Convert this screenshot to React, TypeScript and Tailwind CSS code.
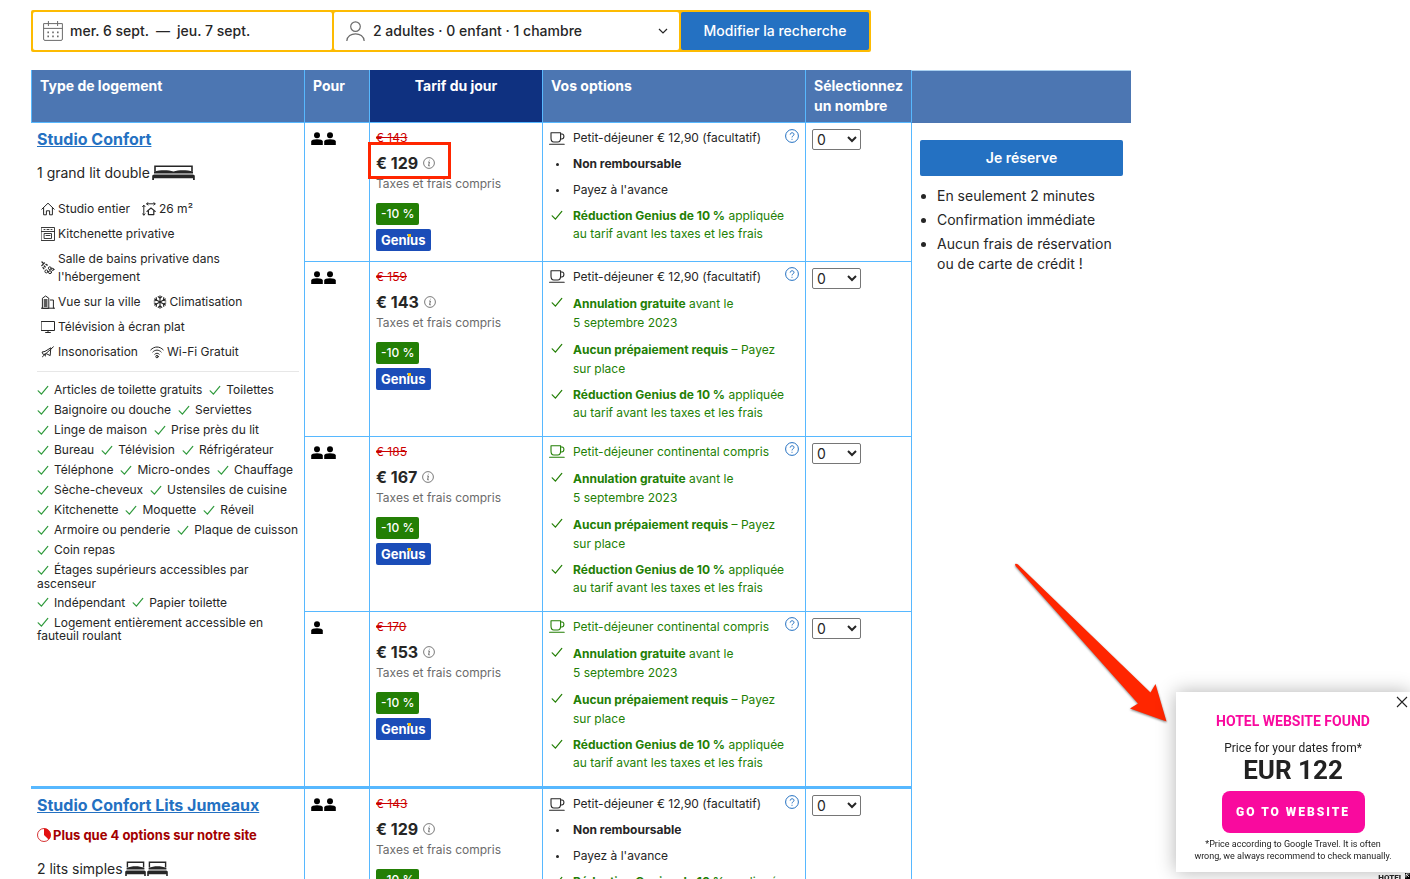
import type { ReactNode } from "react";

type Option = {
  text: string;
  strong?: string;
  second?: string;
};

type Offer = {
  people: number;
  oldPrice: string;
  price: string;
  breakfast: string;
  breakfastIncluded?: boolean;
  refundable?: boolean;
  highlight?: boolean;
};

const studioOffers: Offer[] = [
  { people: 2, oldPrice: "€ 143", price: "€ 129", breakfast: "Petit-déjeuner € 12,90 (facultatif)", highlight: true },
  { people: 2, oldPrice: "€ 159", price: "€ 143", breakfast: "Petit-déjeuner € 12,90 (facultatif)", refundable: true },
  { people: 2, oldPrice: "€ 185", price: "€ 167", breakfast: "Petit-déjeuner continental compris", breakfastIncluded: true, refundable: true },
  { people: 1, oldPrice: "€ 170", price: "€ 153", breakfast: "Petit-déjeuner continental compris", breakfastIncluded: true, refundable: true },
];

const twinOffer: Offer = {
  people: 2,
  oldPrice: "€ 143",
  price: "€ 129",
  breakfast: "Petit-déjeuner € 12,90 (facultatif)",
};

const amenities: string[][] = [
  ["Articles de toilette gratuits", "Toilettes"],
  ["Baignoire ou douche", "Serviettes"],
  ["Linge de maison", "Prise près du lit"],
  ["Bureau", "Télévision", "Réfrigérateur"],
  ["Téléphone", "Micro-ondes", "Chauffage"],
  ["Sèche-cheveux", "Ustensiles de cuisine"],
  ["Kitchenette", "Moquette", "Réveil"],
  ["Armoire ou penderie", "Plaque de cuisson"],
  ["Coin repas"],
  ["Étages supérieurs accessibles par ascenseur"],
  ["Indépendant", "Papier toilette"],
  ["Logement entièrement accessible en fauteuil roulant"],
];

function Check({ className }: { className: string }) {
  return (
    <svg viewBox="0 0 12 12" className={className} fill="none" stroke="currentColor" strokeWidth="1.2" strokeLinecap="round" strokeLinejoin="round">
      <path d="M1.2 5.8 L4.4 9.2 L10.8 1.4" />
    </svg>
  );
}

function Icon({ children }: { children: ReactNode }) {
  return (
    <svg viewBox="0 0 14 14" className="h-[14px] w-[14px] shrink-0" fill="none" stroke="#262626" strokeLinecap="round" strokeLinejoin="round">
      {children}
    </svg>
  );
}

const icons = {
  house: (
    <Icon>
      <path d="M.8 7.2 L7 1.2 L13.2 7.2 M2.6 5.8 V12.8 H5.4 V8.8 H8.6 V12.8 H11.4 V5.8" />
    </Icon>
  ),
  size: (
    <Icon>
      <path d="M4.8 1.8 H13 M6 .6 L4.6 1.8 L6 3 M11.8 .6 L13.2 1.8 L11.8 3 M1.8 3.4 V13 M.6 4.6 L1.8 3.2 L3 4.6 M.6 11.8 L1.8 13.2 L3 11.8" />
      <path d="M5 9.4 L9 6 L13.2 9.4 M6.4 8.8 V12.6 H11.8 V8.8" strokeWidth="1.2" />
    </Icon>
  ),
  oven: (
    <Icon>
      <path d="M.5 .5 H13.5 V13.5 H.5 Z M.5 4.5 H13.500 M3.500 6.500 H10.500 V11.500 H3.500 Z M5 8.500 H9 M3 2.500 H4 M6 2.500 H8 M10 2.500 H11" strokeWidth=".9" />
    </Icon>
  ),
  shower: (
    <Icon>
      <path d="M.8 4.600 L4 1.400 M1 1 L2.200 2.200 M3.200 5 L4.600 6.400 M5 3.400 L6.600 4.400 M2 6.600 L3 8" strokeDasharray="1.4 1" strokeWidth="1.3" />
      <circle cx="8.800" cy="7.200" r="1.4" />
      <circle cx="5.400" cy="10.400" r="1.5" />
      <circle cx="9" cy="11.200" r="1.5" />
      <circle cx="11.800" cy="8.400" r="1.1" />
    </Icon>
  ),
  city: (
    <Icon>
      <path d="M1.4 13 V3.2 L4.6 1 L7.8 3.2 V13 Z M9.4 5 H12.4 V13 M.4 13.2 H13.6" />
      <path d="M3.2 5 H6 M3.2 7 H6 M3.2 9 H6 M3.2 11 H6" strokeWidth="1.3" />
    </Icon>
  ),
  snow: (
    <Icon>
      <path d="M7 .8 V13.2 M1.6 3.9 L12.4 10.1 M1.6 10.1 L12.4 3.9 M5.2 1.6 L7 3.4 L8.8 1.6 M5.2 12.4 L7 10.6 L8.8 12.4 M1.2 6 L3.6 5.2 L3.2 2.6 M12.8 6 L10.4 5.2 L10.8 2.6 M1.2 8 L3.6 8.8 L3.2 11.4 M12.8 8 L10.4 8.8 L10.8 11.4" strokeWidth="1.1" />
    </Icon>
  ),
  tv: (
    <Icon>
      <path d="M.5 1.5 H13.5 V10.5 H.5 Z M7 10.5 V12.5 M4.6 12.5 H9.4" />
    </Icon>
  ),
  mute: (
    <Icon>
      <path d="M1.4 7 L4 6.400 L9.800 2.800 L9.200 10.600 L5.600 8.800 L2.600 9.400 Z M12.4 1.8 L1.4 11.800 M4 9.400 L4.400 11" />
    </Icon>
  ),
  wifi: (
    <Icon>
      <path d="M.8 4.8 C4.4 1 9.6 1 13.2 4.8 M2.8 7 C5.2 4.4 8.8 4.4 11.2 7 M4.8 9.2 C6.2 7.8 7.8 7.8 9.2 9.2" />
      <circle cx="7" cy="11.6" r="1.2" />
    </Icon>
  ),
};

function Feature({ icon, children }: { icon: ReactNode; children: ReactNode }) {
  return (
    <li className="flex items-center gap-[3px]">
      {icon}
      <span>{children}</span>
    </li>
  );
}

function Person() {
  return (
    <svg viewBox="0 0 12 13" className="h-[13px] w-3" fill="#000">
      <circle cx="6" cy="3.2" r="3" />
      <path d="M.2 13 V9.6 C.2 8 2.8 7.2 6 7.2 S11.8 8 11.8 9.6 V13 Z" />
    </svg>
  );
}

function DoubleBed() {
  return (
    <svg viewBox="0 0 43 15" className="mb-[2px] h-[15px] w-[43px]" fill="#262626">
      <path d="M3 6.500 V1.200 H40 V6.500" fill="none" stroke="#262626" strokeWidth="1.6" />
      <path d="M2 8.400 V6.600 C8 4.800 16 4.800 21.500 6.400 C27 4.800 35 4.800 41 6.600 V8.400 Z" />
      <path d="M.2 10.400 L2 9.400 H41 L42.800 10.400 V15 H41 V13.200 H2 V15 H.2 Z" />
    </svg>
  );
}

function SingleBed() {
  return (
    <svg viewBox="0 0 21 15" className="mb-[2px] h-[15px] w-[21px]" fill="#262626">
      <path d="M2.400 6.500 V1.200 H18.600 V6.500" fill="none" stroke="#262626" strokeWidth="1.4" />
      <path d="M1.600 8.400 V7 C7 4.800 14 4.800 19.400 7 V8.400 Z" />
      <path d="M.2 10.400 L1.600 9.400 H19.400 L20.800 10.400 V15 H19.200 V13.200 H1.800 V15 H.2 Z" />
    </svg>
  );
}

function Cup() {
  return (
    <svg viewBox="0 0 16 13" className="mt-[3px] h-[13px] w-4" fill="none" stroke="currentColor" strokeWidth="1.1" strokeLinecap="round" strokeLinejoin="round">
      <path d="M2 .8 H11.6 V6 C11.6 8.6 10.4 10 8.8 10 H4.8 C3 10 2 8.4 2 6 Z M11.6 2 H13 C15.6 2 15.6 7 12.6 7 H11.4 M.6 12.2 H15.2" />
    </svg>
  );
}

function OptionLine({ text, strong, second }: Option) {
  return (
    <li className="flex text-[#237f05]">
      <span className="w-6 shrink-0">
        <Check className="mt-[3px] ml-[2px] h-3 w-3" />
      </span>
      <span className="whitespace-nowrap">
        <strong>{strong}</strong> {text}
        <br />
        {second}
      </span>
    </li>
  );
}

function DotLine({ children }: { children: ReactNode }) {
  return (
    <li className="flex items-center">
      <span className="w-6 shrink-0 pl-[7px]">
        <span className="block h-[3px] w-[3px] rounded-full bg-[#262626]" />
      </span>
      {children}
    </li>
  );
}

function OfferCells({ offer, border }: { offer: Offer; border: string }) {
  const cell = `border-l border-[#57b8ff] align-top ${border}`;

  return (
    <>
      <td className={`${cell} pt-[9px] pl-[6px]`}>
        <div className="flex gap-px">
          {Array.from({ length: offer.people }, (_, i) => (
            <Person key={i} />
          ))}
        </div>
      </td>
      <td className={`${cell} px-[6px] pt-[6px]`}>
        <div className="text-xs leading-[18px] text-[#cc0000] line-through">{offer.oldPrice}</div>
        <div className="relative mt-1 flex h-6 items-center gap-[5px]">
          <span className="text-base font-bold">{offer.price}</span>
          <svg viewBox="0 0 12 12" className="h-3 w-3" fill="none" stroke="#6b6b6b">
            <circle cx="6" cy="6" r="5.4" strokeWidth=".9" />
            <path d="M5.2 5 H6.4 L5.6 8.8 H6.8 M6.4 2.8 V3.4" />
          </svg>
          {offer.highlight && (
            <span className="absolute -top-[9px] -left-2 h-[37px] w-[83px] border-3 border-[#ff2600]" />
          )}
        </div>
        <div className="text-xs leading-[18px] text-[#6b6b6b]">Taxes et frais compris</div>
        <div className="mt-[10px] flex flex-col items-start gap-1 text-white">
          <span className="h-[22px] rounded-xs bg-[#237f05] px-[5px] text-xs leading-[22px] font-medium">-10 %</span>
          <span className="relative h-[22px] rounded-xs bg-[#1b4db8] px-[5px] text-[13px] leading-[22px] font-bold">
            Genius
            <i className="absolute top-[5px] left-[32px] h-[3px] w-[3px] bg-[#febb02]" />
          </span>
        </div>
      </td>
      <td className={`${cell} px-[6px] ${offer.refundable ? "pt-[5px]" : "pt-[6px]"}`}>
        <div className="flex justify-between">
          <ul className={`space-y-2 text-xs ${offer.refundable ? "leading-[19px]" : "leading-[18px]"}`}>
            <li className={offer.breakfastIncluded ? "flex text-[#237f05]" : "flex"}>
              <span className="w-6 shrink-0">
                <Cup />
              </span>
              <span className="whitespace-nowrap">{offer.breakfast}</span>
            </li>
            {offer.refundable ? (
              <>
                <OptionLine strong="Annulation gratuite" text="avant le" second="5 septembre 2023" />
                <OptionLine strong="Aucun prépaiement requis" text="– Payez" second="sur place" />
              </>
            ) : (
              <>
                <DotLine>
                  <strong>Non remboursable</strong>
                </DotLine>
                <DotLine>Payez à l'avance</DotLine>
              </>
            )}
            <div className="leading-[18px]">
              <OptionLine strong="Réduction Genius de 10 %" text="appliquée" second="au tarif avant les taxes et les frais" />
            </div>
          </ul>
          <svg viewBox="0 0 14 14" className="-ml-4 h-[14px] w-[14px] shrink-0" fill="none" stroke="#2471c2">
            <circle cx="7" cy="7" r="6.4" />
            <path d="M5.2 5.6 C5.2 3.2 9 3.2 9 5.4 C9 6.8 7 6.8 7 8.4 M7 9.8 V10.8" />
          </svg>
        </div>
      </td>
      <td className={`${cell} pt-[6px] pl-[6px]`}>
        <select aria-label="Sélectionnez un nombre" className="block h-[21px] w-[49px] rounded-xs border border-[#767676] bg-white text-sm leading-[19px]">
          <option>0</option>
          <option>1</option>
          <option>2</option>
        </select>
      </td>
    </>
  );
}

function SearchBar() {
  return (
    <form className="flex h-[42px] max-w-[840px] gap-[2px] rounded-xs bg-[#fdbb02] p-[2px] text-sm font-medium">
      <button type="button" className="flex flex-1 items-center gap-[7px] rounded-xs bg-white pl-[10px]">
        <svg viewBox="0 0 20 20" className="h-5 w-5" fill="none" stroke="#6b6b6b">
          <path d="M.6 2.6 H19.4 V18 Q19.4 19.4 18 19.4 H2 Q.6 19.4 .6 18 Z M.6 7.4 H19.4 M5.4 0 V5 M14.6 0 V5" />
          <path d="M4.4 11.4 H16 M4.4 15.4 H16" strokeWidth="1.6" strokeDasharray="1.6 3.2" />
        </svg>
        <span>mer. 6 sept.</span>
        <span>—</span>
        <span>jeu. 7 sept.</span>
      </button>
      <button type="button" className="flex w-[345px] items-center gap-2 rounded-xs bg-white pr-[11px] pl-3">
        <svg viewBox="0 0 19 20" className="h-5 w-[19px]" fill="none" stroke="#6b6b6b" strokeWidth="1.2">
          <circle cx="9.5" cy="5.6" r="4.8" />
          <path d="M.8 20 C1.4 10.4 17.6 10.4 18.2 20" />
        </svg>
        <span>2 adultes · 0 enfant · 1 chambre</span>
        <svg viewBox="0 0 10 6" className="ml-auto h-[6px] w-[10px]" fill="none" stroke="#262626" strokeWidth="1.2">
          <path d="M1 1 L5 5 L9 1" />
        </svg>
      </button>
      <button type="submit" className="w-[188px] rounded-xs bg-[#2471c2] text-white">
        Modifier la recherche
      </button>
    </form>
  );
}

function StudioDetails() {
  return (
    <div className="px-[5px] pt-1">
      <a href="#studio" className="text-base leading-6 font-bold text-[#2471c2] underline">
        Studio Confort
      </a>
      <div className="mt-3 flex h-5 items-center gap-[2px] text-sm">
        1 grand lit double <DoubleBed />
      </div>
      <div className="mt-[17px] space-y-[7px] border-b border-[#e7e7e7] pb-[10px] pl-1 text-xs leading-[18px]">
        <ul className="flex gap-3">
          <Feature icon={icons.house}>Studio entier</Feature>
          <Feature icon={icons.size}>26 m²</Feature>
        </ul>
        <ul>
          <Feature icon={icons.oven}>Kitchenette privative</Feature>
        </ul>
        <ul className="max-w-[200px]">
          <Feature icon={icons.shower}>Salle de bains privative dans l'hébergement</Feature>
        </ul>
        <ul className="flex gap-3">
          <Feature icon={icons.city}>Vue sur la ville</Feature>
          <Feature icon={icons.snow}>Climatisation</Feature>
        </ul>
        <ul>
          <Feature icon={icons.tv}>Télévision à écran plat</Feature>
        </ul>
        <ul className="flex gap-3">
          <Feature icon={icons.mute}>Insonorisation</Feature>
          <Feature icon={icons.wifi}>Wi-Fi Gratuit</Feature>
        </ul>
      </div>
      <div className="pt-2 text-xs">
        {amenities.map((row) => (
          <ul key={row[0]} className={row[0].length > 40 ? "max-w-[240px] py-[3px] leading-[13px]" : "flex gap-[7px] py-[3px] leading-[14px] whitespace-nowrap"}>
            {row.map((name) => (
              <li key={name}>
                <Check className="mr-[5px] inline h-3 w-3 text-[#2f9a3c]" />
                {name}
              </li>
            ))}
          </ul>
        ))}
      </div>
    </div>
  );
}

function TwinDetails() {
  return (
    <div className="px-[5px] pt-1">
      <a href="#twin" className="text-base leading-6 font-bold text-[#2471c2] underline">
        Studio Confort Lits Jumeaux
      </a>
      <div className="mt-[9px] flex items-center gap-[2px] text-[13px] leading-[18px] font-bold text-[#a30000]">
        <svg viewBox="0 0 14 14" className="h-[14px] w-[14px]">
          <circle cx="7" cy="7" r="6.5" fill="#fff" stroke="#cc0000" strokeWidth=".8" />
          <path d="M7 7 V.6 A6.4 6.4 0 0 1 11.6 11.6 Z" fill="#e21111" />
        </svg>
        Plus que 4 options sur notre site
      </div>
      <div className="mt-[15px] flex h-5 items-center gap-[2px] text-sm">
        2 lits simples
        <span className="flex gap-px">
          <SingleBed />
          <SingleBed />
        </span>
      </div>
    </div>
  );
}

function HotelPopup() {
  return (
    <aside className="fixed right-0 bottom-[7px] w-[234px] bg-white px-4 pt-5 pb-[10px] text-center font-['Roboto',sans-serif] text-[#222] shadow-[0_0_18px_rgba(0,0,0,0.3)]">
      <button type="button" aria-label="Fermer" className="absolute top-1 right-[2px]">
        <svg viewBox="0 0 12 12" className="h-3 w-3" stroke="#222" strokeWidth="1.1">
          <path d="M1 1 L11 11 M11 1 L1 11" />
        </svg>
      </button>
      <h2 className="text-sm leading-[18px] font-bold text-[#f90a9e]">HOTEL WEBSITE FOUND</h2>
      <p className="mt-[10px] text-xs leading-4">Price for your dates from*</p>
      <p className="text-[26px] leading-[28px] font-bold">EUR 122</p>
      <button type="button" className="mt-[7px] h-[42px] w-[143px] rounded-lg bg-[#f90a9e] text-xs font-black tracking-[2px] text-white">
        GO TO WEBSITE
      </button>
      <p className="mt-[5px] text-[9px] leading-3 whitespace-nowrap">
        *Price according to Google Travel. It is often
        <br />
        wrong, we always recommend to check manually.
      </p>
    </aside>
  );
}

export default function App() {
  return (
    <div className="relative h-screen overflow-hidden bg-white pt-[10px] pr-4 pl-[31px] font-['Inter',sans-serif] text-[#262626]">
      <SearchBar />

      <table className="mt-[18px] w-full max-w-[1100px] table-fixed border-separate border-spacing-0 text-left">
        <colgroup>
          <col className="w-[273px]" />
          <col className="w-[65px]" />
          <col className="w-[173px]" />
          <col className="w-[263px]" />
          <col className="w-[106px]" />
          <col />
        </colgroup>
        <thead>
          <tr className="h-[52px] bg-[#4c76b2] align-top text-sm leading-5 text-white">
            <th className="border-l border-[#57b8ff] px-2 pt-[6px]">Type de logement</th>
            <th className="border-l border-[#57b8ff] px-2 pt-[6px]">Pour</th>
            <th className="border-l border-[#57b8ff] bg-[#0f3180] px-2 pt-[6px] text-center">Tarif du jour</th>
            <th className="border-l border-[#57b8ff] px-2 pt-[6px]">Vos options</th>
            <th className="border-l border-[#57b8ff] px-2 pt-[6px]">
              Sélectionnez
              <br />
              un nombre
            </th>
            <th className="border-t border-l border-t-[#a9d0f0] border-l-[#57b8ff]" />
          </tr>
        </thead>
        <tbody>
          {studioOffers.map((offer, i) => (
            <tr key={offer.oldPrice} className={i === 0 ? "h-[139px]" : "h-[175px]"}>
              {i === 0 && (
                <td rowSpan={4} className="border-t border-[#57b8ff] pl-px align-top">
                  <StudioDetails />
                </td>
              )}
              <OfferCells offer={offer} border="border-t" />
              {i === 0 && (
                <td rowSpan={5} className="border-t border-l border-t-[#4c76b2] border-l-[#57b8ff] px-2 pt-[17px] align-top text-sm leading-5">
                  <button type="button" className="h-9 w-full rounded-xs bg-[#2471c2] font-semibold text-white">
                    Je réserve
                  </button>
                  <ul className="mt-[10px] list-disc space-y-1 pl-[17px]">
                    <li>En seulement 2 minutes</li>
                    <li>Confirmation immédiate</li>
                    <li>
                      Aucun frais de réservation
                      <br />
                      ou de carte de crédit !
                    </li>
                  </ul>
                </td>
              )}
            </tr>
          ))}
          <tr className="h-[141px]">
            <td className="border-t-3 border-[#57b8ff] pl-px align-top">
              <TwinDetails />
            </td>
            <OfferCells offer={twinOffer} border="border-t-3" />
          </tr>
        </tbody>
      </table>

      {/* arrow drawn over the page, pointing at the popup */}
      <svg viewBox="0 0 160 165" className="absolute top-[560px] left-[1010px] h-[165px] w-[160px] drop-shadow-[0_1px_1px_rgba(0,0,0,0.5)]" fill="#ff2600">
        <path d="M5 4 Q6.500 3.500 8 4.500 L140.500 132.500 L145.500 124 L156.500 161.500 L120 148.500 L128 143.500 L5.500 6 Z" />
      </svg>

      <HotelPopup />
      <div className="fixed right-0 bottom-0 flex h-[6px] items-start gap-[2px] font-['Roboto',sans-serif] text-[8px] leading-[10px] font-black">
        HOTEL
        <svg viewBox="0 0 5 6" className="h-[6px] w-[5px]">
          <path d="M0 0 H5 V6 H0 Z" fill="#000" />
          <path d="M1 4.500 V1 H4.500 M1 1 L4 4" stroke="#fff" strokeWidth=".8" fill="none" />
        </svg>
      </div>
    </div>
  );
}
